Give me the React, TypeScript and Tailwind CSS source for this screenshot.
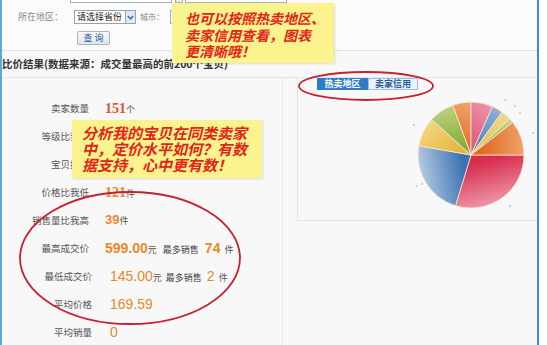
import React from 'react';

const cjk = '"Noto Sans CJK SC", "Noto Sans", sans-serif';

type Row = {
  label: string;
  value?: React.ReactNode;
  shift?: boolean;
};

const orange = 'text-[#e8892a]';

const rows: Row[] = [
  {
    label: '卖家数量',
    value: (
      <>
        <span className="text-[14px] font-bold text-[#e0502f]" style={{ fontFamily: '"Liberation Serif", serif' }}>151</span>
        <span className="text-[9px] text-[#555]">个</span>
      </>
    ),
  },
  // these two sit under the yellow note
  { label: '等级比我高' },
  { label: '宝贝排名' },
  {
    label: '价格比我低',
    value: (
      <>
        <span className={`text-[14px] font-bold ${orange}`} style={{ fontFamily: '"Liberation Serif", serif' }}>121</span>
        <span className="text-[9px] text-[#555]">件</span>
      </>
    ),
  },
  {
    label: '销售量比我高',
    value: (
      <>
        <span className={`text-[13px] font-bold ${orange}`}>39</span>
        <span className="text-[9px] text-[#555]">件</span>
      </>
    ),
  },
  {
    label: '最高成交价',
    value: (
      <>
        <span className={`text-[14px] font-bold ${orange}`}>599.00</span>
        <span className="text-[9px] text-[#555]">元</span>
        <span className="ml-[6px] text-[9px] text-[#444]">最多销售</span>
        <span className={`ml-[6px] text-[14px] font-bold ${orange}`}>74</span>
        <span className="ml-[4px] text-[9px] text-[#555]">件</span>
      </>
    ),
  },
  {
    label: '最低成交价',
    shift: true,
    value: (
      <>
        <span className={`text-[14px] ${orange}`}>145.00</span>
        <span className="text-[9px] text-[#555]">元</span>
        <span className="ml-[4px] text-[9px] text-[#444]">最多销售</span>
        <span className={`ml-[5px] text-[14px] ${orange}`}>2</span>
        <span className="ml-[4px] text-[9px] text-[#555]">件</span>
      </>
    ),
  },
  { label: '平均价格', shift: true, value: <span className={`text-[14px] ${orange}`}>169.59</span> },
  { label: '平均销量', shift: true, value: <span className={`text-[14px] ${orange}`}>0</span> },
];

// pie slices: clockwise degrees from east
const slices = [
  { a0: 0, a1: 107, c0: '#d62e4d', c1: '#ee94a6' },
  { a0: 107, a1: 190, c0: '#3a73b2', c1: '#b3c8e2' },
  { a0: 190, a1: 222, c0: '#e6b43c', c1: '#f3d680' },
  { a0: 222, a1: 250, c0: '#86ad3c', c1: '#bcd27e' },
  { a0: 250, a1: 270, c0: '#e2742f', c1: '#efa56a' },
  { a0: 270, a1: 294, c0: '#e05a7c', c1: '#ee94aa' },
  { a0: 294, a1: 306, c0: '#4f84c4', c1: '#93b3dc' },
  { a0: 306, a1: 317, c0: '#e4c050', c1: '#f1da8e' },
  { a0: 317, a1: 322, c0: '#98bb48', c1: '#c2d98a' },
  { a0: 322, a1: 360, c0: '#e06a1e', c1: '#eea36a' },
];

function slicePath(cx: number, cy: number, r: number, a0: number, a1: number) {
  const rad = (d: number) => (d * Math.PI) / 180;
  const x0 = cx + r * Math.cos(rad(a0));
  const y0 = cy + r * Math.sin(rad(a0));
  const x1 = cx + r * Math.cos(rad(a1));
  const y1 = cy + r * Math.sin(rad(a1));
  const large = a1 - a0 > 180 ? 1 : 0;
  return `M${cx} ${cy} L${x0.toFixed(2)} ${y0.toFixed(2)} A${r} ${r} 0 ${large} 1 ${x1.toFixed(2)} ${y1.toFixed(2)} Z`;
}

function Pie() {
  const cx = 173;
  const cy = 65;
  const r = 53;
  const dots = [
    [207, 10], [217, 16], [222, 23], [235, 43], [116, 35], [119, 96], [212, 116], [124, 94],
  ];
  return (
    <svg width="239" height="130" viewBox="0 0 239 130">
      <defs>
        {slices.map((s, i) => {
          const mid = ((s.a0 + s.a1) / 2) * (Math.PI / 180);
          return (
            <linearGradient
              key={i}
              id={`g${i}`}
              gradientUnits="userSpaceOnUse"
              x1={cx + 10 * Math.cos(mid)}
              y1={cy + 10 * Math.sin(mid)}
              x2={cx + r * Math.cos(mid + 0.3)}
              y2={cy + r * Math.sin(mid + 0.3)}
            >
              <stop offset="0" stopColor={s.c0} />
              <stop offset="1" stopColor={s.c1} />
            </linearGradient>
          );
        })}
      </defs>
      {dots.map(([x, y], i) => (
        <circle key={i} cx={x} cy={y} r="0.9" fill="#b9c0c8" />
      ))}
      {slices.map((s, i) => (
        <path
          key={i}
          d={slicePath(cx, cy, r, s.a0, s.a1)}
          fill={`url(#g${i})`}
          stroke="#fbe7d8"
          strokeWidth="0.8"
          strokeLinejoin="round"
        />
      ))}
    </svg>
  );
}

function Note({ className, lines, size }: { className: string; lines: string[]; size: string }) {
  return (
    <div
      className={`absolute bg-[#fbf38d] shadow-[1px_1px_2px_rgba(0,0,0,0.12)] ${className}`}
      style={{ fontFamily: cjk }}
    >
      {lines.map((l) => (
        <div key={l} className={`font-bold italic text-[#e3241b] whitespace-nowrap ${size}`}>
          {l}
        </div>
      ))}
    </div>
  );
}

export default function App() {
  return (
    <div className="relative w-[547px] h-[345px] overflow-hidden bg-white" style={{ fontFamily: cjk }}>
      <div className="w-[539px] h-full flex flex-col bg-[#f8f8f9] border-l-2 border-l-[#5aaad6] border-r-2 border-r-[#3a8ed4]">
        {/* search form */}
        <div className="h-[51px] shrink-0 flex flex-col border-b border-dotted border-[#c9ccd0] bg-[#fbfbfc]">
          <div className="flex mt-[-11px] h-[14px] pl-[68px]">
            <div className="w-[102px] bg-white border border-[#a9b0b8]" />
            <div className="w-[8px] ml-[3px] bg-[#e9edf2] border border-[#a9b0b8]" />
            <div className="w-[102px] ml-[2px] bg-white border border-[#a9b0b8]" />
          </div>
          <div className="flex items-center mt-[7px] h-[14px]">
            <div className="w-[61px] text-right text-[9px] text-[#888]">所在地区：</div>
            <div className="ml-[11px] flex h-[14px] border border-[#98a2ae] bg-white">
              <div className="w-[50px] text-[9px] leading-[12px] pl-[2px] text-[#222]">请选择省份</div>
              <div className="w-[10px] bg-[#dfe9f5] border-l border-[#98a2ae] flex items-center justify-center">
                <svg width="7" height="5" viewBox="0 0 7 5">
                  <path d="M0.8 1 L3.5 3.8 L6.2 1" fill="none" stroke="#2f6fc0" strokeWidth="1.5" />
                </svg>
              </div>
            </div>
            <div className="ml-[4px] text-[8px] text-[#888]">城市：</div>
            <div className="ml-[6px] w-[100px] h-[14px] bg-white border border-[#a9b0b8]" />
          </div>
          <div className="flex mt-[7px] pl-[75px]">
            <div className="w-[33px] h-[14px] flex items-center justify-center text-[9px] text-[#2d5c97] border border-[#a8b4c4] rounded-[2px] bg-gradient-to-b from-[#fafbfd] to-[#dfe4ea]">
              查 询
            </div>
          </div>
        </div>

        {/* heading */}
        <div className="h-[26px] shrink-0 flex items-center text-[10.5px] font-bold text-[#333]">
          比价结果(数据来源：成交量最高的前200个宝贝)
        </div>

        {/* results */}
        <div className="flex flex-1 border-t border-[#e4e6e9]">
          <div className="w-[281px] shrink-0 border-r border-[#e8eaec] pt-[16px]">
            {rows.map((r) => (
              <div key={r.label} className={`flex items-center h-[28px] ${r.shift ? 'pl-[3px]' : ''}`}>
                <div className="w-[87px] text-right text-[9.5px] text-[#555]">{r.label}</div>
                {r.value && (
                  <div className={`flex items-baseline ${r.shift ? 'ml-[18px]' : 'ml-[16px]'}`} style={{ fontFamily: '"Liberation Sans", ' + cjk }}>
                    {r.value}
                  </div>
                )}
              </div>
            ))}
          </div>
          <div className="flex-1 pl-[14px]">
            <div className="h-[143px] border-l border-b border-[#e3e5e8] flex flex-col">
              <div className="flex ml-[19px] h-[12px]">
                <div className="w-[51px] bg-[#2e7cc9] text-white text-[9px] font-bold flex items-center justify-center">热卖地区</div>
                <div className="w-[50px] bg-[#eaf2fb] border border-[#9fbde2] text-[#2a5b98] text-[9px] font-bold flex items-center justify-center">卖家信用</div>
              </div>
              <Pie />
            </div>
          </div>
        </div>
      </div>

      <Note
        className="left-[172px] top-[3px] w-[162px] h-[60px] pl-[13px] pt-[7px]"
        size="text-[14px] leading-[16.5px]"
        lines={['也可以按照热卖地区、', '卖家信用查看，图表', '更清晰哦！']}
      />
      <Note
        className="left-[72px] top-[120px] w-[190px] h-[58px] pl-[10px] pt-[5px]"
        size="text-[15px] leading-[16px]"
        lines={['分析我的宝贝在同类卖家', '中，定价水平如何？有数', '据支持，心中更有数！']}
      />

      {/* hand-drawn red ellipses */}
      <svg className="absolute left-0 top-0 pointer-events-none" width="547" height="345">
        <ellipse cx="366" cy="86" rx="67" ry="14" fill="none" stroke="#c8202f" strokeWidth="1.8" />
        <ellipse cx="130" cy="258" rx="110" ry="66" fill="none" stroke="#c8202f" strokeWidth="1.8" />
      </svg>
    </div>
  );
}
